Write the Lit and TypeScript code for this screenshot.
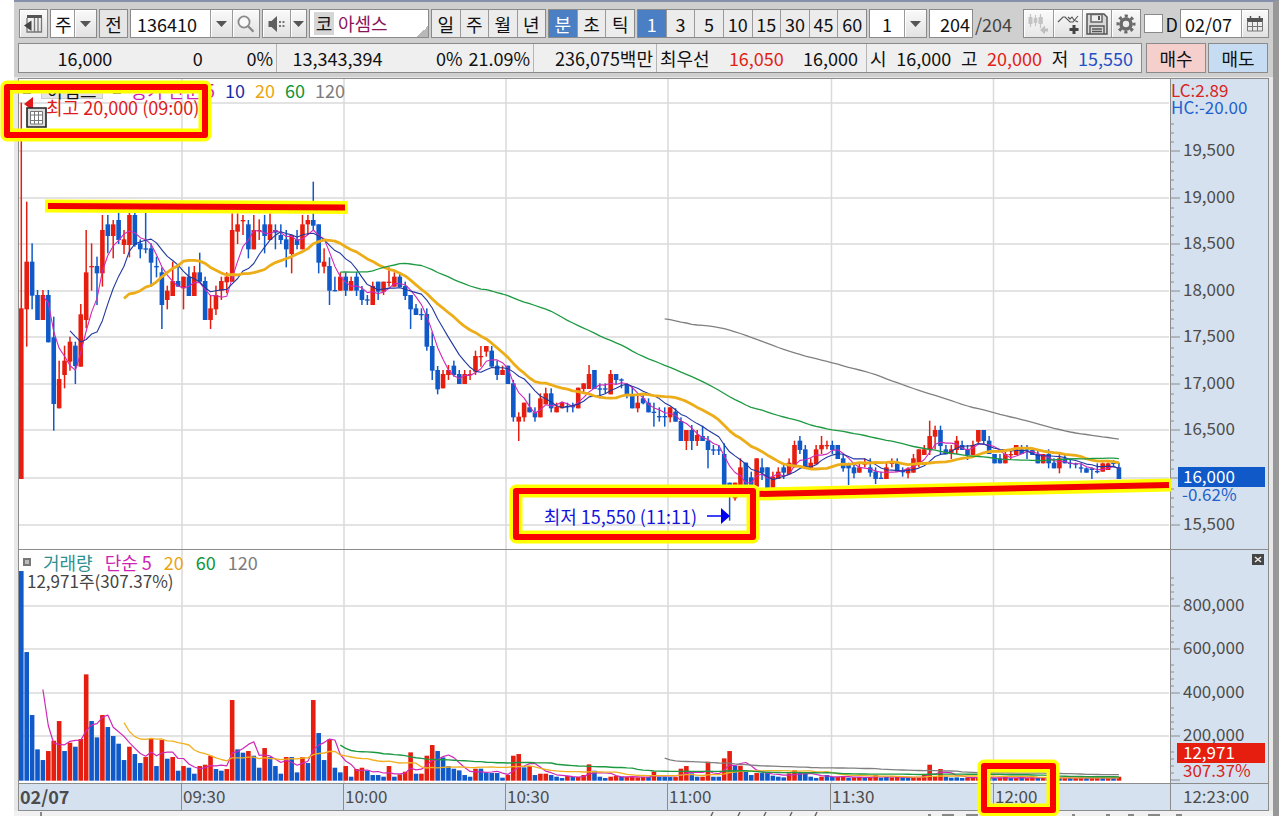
import { LitElement, html, svg, css } from "lit";
import { customElement, state } from "lit/decorators.js";

/* ---------- data ---------- */

const RED = "#e61e0f";
const BLUE = "#1059c9";
const X0 = 21.3;
const STEP = 5.407;
const cx = (i: number) => X0 + STEP * i;

interface Candle {
  up: boolean;
  high: number;
  top: number;
  bottom: number;
  low: number;
}

/* Each entry: direction, high, body top, body bottom, low, in thirds of a unit below `top`. */
const block = (top: number, rows: string): Candle[] =>
  rows
    .trim()
    .split(/\s*;\s*/)
    .filter(Boolean)
    .map((r) => {
      const [d, ...v] = r.split(",");
      const [high, t, b, low] = v.map((n) => top + Number(n) / 3);
      return { up: d === "r", high, top: t, bottom: b, low };
    });

const candles: Candle[] = [
  ...block(
    80,
    `r,68,685,1197,1197;r,365,545,688,800;b,490,545,647,688;b,630,645,720,720;r,630,645,720,720;b,630,645,787,787;
b,710,772,972,1052;r,842,897,985,985;r,797,842,885,925;r,770,785,845,872;b,785,797,858,912;r,672,703,860,860;
r,450,577,720,745;r,490,558,562,632;b,530,558,580,675;r,405,450,580,620;b,405,433,468,520;r,420,433,468,535;
b,398,420,480,492;r,450,478,495,522;r,398,405,495,532;b,398,405,495,500;b,478,490,508,535;b,398,505,509,520;
b,490,505,548,620;b,530,558,562,592;b,562,577,675,747;r,617,632,660,688;r,545,603,648,648;b,560,603,620,620;
r,590,590,625,688;b,560,590,648,648;r,558,577,648,648;b,518,577,605,605;b,590,603,720,720;r,645,685,720,747;
r,617,645,688,705;r,590,603,632,660;r,577,590,607,640;r,400,450,605,605;r,400,433,455,492;r,405,420,424,465;
b,420,433,508,535;r,405,450,508,508;r,418,450,454,480;b,405,433,468,520;r,400,433,480,480;b,433,450,458,508;
b,433,465,480,492;b,450,478,508,562;r,465,465,522,580;b,450,478,495,508;r,405,433,508,508;r,405,420,433,465;
b,305,420,437,450;b,433,433,548,580;r,505,545,560,580;b,532,558,632,675;b,590,630,634,634`,
  ),
  ...block(
    220,
    `r,157,170,212,212;b,157,170,212,228;r,170,183,212,212;b,157,170,212,228;b,198,210,240,255;b,225,238,242,255;
r,185,198,255,255;b,185,185,215,240;r,185,185,215,225;r,142,185,189,200;r,157,170,200,200;b,157,170,202,202;
b,185,198,228,240;b,225,225,268,327;b,252,265,285,285;b,265,282,286,300;b,265,282,380,392;b,335,378,452,480;
b,438,450,508,523;r,450,462,505,505;r,435,450,465,480;b,422,437,465,470;b,450,462,492,492;r,450,462,492,492;
r,450,462,466,480;r,392,408,455,465;r,378,408,412,440;r,378,378,395,410;b,378,392,440,440;b,422,437,465,480;
r,437,450,465,465;b,437,437,492,492;b,480,490,592,605;r,577,590,605,663;r,548,548,592,605;b,520,562,577,577;
b,562,577,592,605;r,520,535,592,592;r,503,520,553,553;b,505,520,565,577;r,548,560,577,577;r,545,548,565,565;
b,548,558,562,577;b,548,558,562,577;r,503,503,565,565;r,490,490,507,520;r,435,462,507,507;b,450,450,507,507;
b,490,505,509,535;b,490,505,509,520;r,450,462,523,523;b,462,462,480,492;b,475,478,482,505;b,490,492,523,535;
b,500,522,565,565;r,520,548,565,577;b,522,535,550,553;b,535,548,577,577;b,548,575,579,620;b,562,588,592,605;
b,562,588,592,620;r,562,562,592,607;b,565,575,605,605;b,592,603,663,663;r,630,630,663,690;b,615,630,663,690;
r,630,645,663,678;b,617,648,663,663;b,648,662,690,745;b,675,688,692,705;b,675,688,692,705`,
  ),
  ...block(
    380,
    `b,190,222,320,320;b,308,308,335,422;r,308,308,355,362;r,235,262,320,320;b,248,248,315,320;b,275,292,320,320;
r,235,235,320,320;b,235,262,278,300;b,262,262,325,325;r,275,290,325,325;r,262,275,297,297;b,250,262,278,297;
r,235,248,283,283;r,182,195,262,262;b,168,182,210,222;b,195,208,265,265;r,235,248,265,265;r,195,208,253,253;
r,168,195,208,222;r,182,195,199,208;b,182,195,210,222;b,195,195,237,237;b,222,235,265,275;b,248,250,265,315;
b,248,262,280,295;r,248,262,278,278;r,235,250,254,262;b,235,262,278,290;b,262,275,297,312;b,275,293,297,297;
r,248,262,297,297;r,235,248,252,262;b,235,248,275,275;b,262,273,277,290;r,262,265,280,295;r,222,235,278,278;
r,208,208,250,262;r,195,208,225,225;r,122,168,210,225;r,137,150,170,208;b,137,150,198,222;b,195,208,223,223;
r,195,208,222,237;r,168,182,210,222;b,182,195,210,210;b,195,208,225,240;r,182,195,225,225;r,150,150,185,195;
b,150,150,183,195;b,168,182,222,222;b,222,222,250,250;b,222,235,250,250;r,208,222,250,250;r,208,222,226,237;
r,195,195,225,225;b,195,208,222,222;b,195,208,212,237;b,208,210,225,225;b,208,222,250,250;r,222,222,250,250;
b,208,222,250,265;b,235,248,265,265;r,222,235,265,280;b,222,235,250,250;b,235,248,252,265;b,248,250,254,265;
b,250,262,266,278;b,262,265,278,278;b,262,265,270,297;b,250,273,277,280;r,248,250,275,275;r,248,250,270,270;
b,240,248,252,262;b,248,262,297,297`,
  ),
];

/* Volume bar heights in thirds; a negative value is a falling minute. */
const volumes: number[] = [
  -629, -386, -197, -94, -62, 89, 120, 179, -89, 114, -102, 125, 319, -179, -130, 197, -161, -134, -111, -62,
  102, -80, -53, 71, 125, -44, 122, -66, 71, -30, 44, -39, -21, 44, 48, 75, -35, -30, 35, 242,
  -94, -84, 89, -75, -39, 98, -71, -44, -21, 71, -71, -25, 71, -53, 242, -143, -62, 124, -39, -25,
  44, -12, 35, 39, -30, -17, -17, -12, 44, -12, 19, 27, 85, -21, 21, 75, 107, -89, -70, -44,
  -36, -31, -17, -12, 36, -36, -23, -23, -23, -9, 17, 75, 80, -40, 44, -17, 21, 21, -17, -12,
  -8, 14, -11, 11, 17, 49, -30, -12, -8, 12, 14, -12, 11, 11, 10, 11, -11, 27, -12, -12,
  -11, 11, 36, 44, -22, -12, 12, 57, -12, -12, 67, 89, -45, 45, -27, -17, 23, -23, -23, -15,
  -12, -10, 22, 31, -23, -21, -12, -8, 12, -17, -11, 11, 12, -9, 10, 11, -9, 10, 17, -9,
  -11, 10, 12, -9, -9, 10, 10, 20, 48, 13, 35, -12, -9, -10, -8, 9, 11, 9, 8, -8,
  -8, 9, 11, -8, 8, -9, 8, 10, -9, 8, -8, 9, -8, 8, -9, 8, 9, -8, 8, 9,
  -8, 8, -9, 12,
];

const VBASE = 780.7;

const average = (vals: number[], n: number): string => {
  const out: string[] = [];
  let sum = 0;
  vals.forEach((v, i) => {
    sum += v;
    if (i >= n) sum -= vals[i - n];
    if (i >= n - 1) out.push(`${cx(i).toFixed(1)},${(sum / n).toFixed(1)}`);
  });
  return out.join(" ");
};

const closes = candles.map((c) => (c.up ? c.top : c.bottom));
const volTops = volumes.map((v) => VBASE - Math.abs(v) / 3);

const TIMES = [182, 344, 506, 668, 831.5, 993.5];
const PRICES: [number, string][] = [
  [151, "19,500"],
  [198, "19,000"],
  [244, "18,500"],
  [291, "18,000"],
  [337, "17,500"],
  [384, "17,000"],
  [430, "16,500"],
  [478, ""],
  [525, "15,500"],
];
const VOLS: [number, string][] = [
  [606, "800,000"],
  [649, "600,000"],
  [693, "400,000"],
  [736, "200,000"],
];

const line = (pts: string, color: string, w: number) =>
  svg`<polyline points=${pts} fill="none" stroke=${color} stroke-width=${w} stroke-linejoin="round"/>`;

/* ---------- icons ---------- */

const caret = svg`<svg viewBox="0 0 11 6" width="11" height="6"><path d="M0 0H11L5.5 6Z" fill="#555"/></svg>`;
const iconDock = svg`<svg viewBox="0 0 20 20" width="20" height="20"><path d="M3 1H18V4H3Z" fill="#555"/><path d="M3 4V18H17.5V4M10.500 4V18M14 4V18" fill="none" stroke="#777" stroke-width="1.300"/><path d="M7.500 6.500V17L0 11.500Z" fill="#444"/></svg>`;
const iconSearch = svg`<svg viewBox="0 0 20 20" width="20" height="20"><circle cx="8" cy="8" r="5.600" fill="#f8f8f8" stroke="#8a8a8a" stroke-width="1.800"/><path d="M12.200 12.200L17.500 17.800" stroke="#8a8a8a" stroke-width="2.400"/></svg>`;
const iconSpeaker = svg`<svg viewBox="0 0 20 20" width="20" height="20"><path d="M1.500 7H4.500L10 2V18L4.500 13H1.500Z" fill="#5f5f5f"/><path d="M12 8h2M15.500 8h2M12 12h2M15.500 12h2" stroke="#777" stroke-width="2"/></svg>`;
const iconCandles = svg`<svg viewBox="0 0 22 22" width="22" height="22"><path d="M3.500 1V14M8.500 2V13M13.500 1V15" stroke="#b5b5b5" stroke-width="1.200"/><path d="M1.500 4h4v7h-4zM6.700 5h3.600v5H6.700zM11.500 4h4.300v7h-4.300z" fill="#b5b5b5"/><path d="M13 17L18 12.500V15.500H21V18.500H18V21.500Z" fill="#b0b0b0"/></svg>`;
const iconWaves = svg`<svg viewBox="0 0 22 22" width="22" height="22"><path d="M1 9L6 4L8 4L13 9L16 9L21 3M11 4L13 6L15 4L17 7L21 9" fill="none" stroke="#555" stroke-width="1.100"/><path d="M17 12V21M12.500 16.500H21.500" stroke="#444" stroke-width="3"/></svg>`;
const iconSave = svg`<svg viewBox="0 0 22 22" width="22" height="22"><path d="M1 1H18L21 4V21H1Z" fill="#d8d8d8" stroke="#555" stroke-width="1.500"/><path d="M5 1.500H16V9H5Z" fill="#eee" stroke="#666" stroke-width="1.500"/><path d="M12 3h2v4h-2z" fill="#555"/><path d="M4 21V13H18V21M6 16H16M6 18.500H16" fill="none" stroke="#555" stroke-width="1.400"/></svg>`;
const iconGear = svg`<svg viewBox="0 0 20 20" width="20" height="20"><circle cx="10" cy="10" r="8" fill="none" stroke="#6a6a6a" stroke-width="3" stroke-dasharray="3.140 3.143" stroke-dashoffset="1.570"/><circle cx="10" cy="10" r="5" fill="none" stroke="#6a6a6a" stroke-width="3.600"/></svg>`;
const iconCalendar = svg`<svg viewBox="0 0 18 18" width="18" height="18"><path d="M1 3H17V7H1Z" fill="#555"/><path d="M4.500 1V4M13.500 1V4" stroke="#555" stroke-width="1.500"/><path d="M1.500 6V16H16.500V6M1 11.500H17M6.500 7V16M11.500 7V16" fill="none" stroke="#777"/></svg>`;
const iconTable = svg`<svg viewBox="0 0 21 21" width="21" height="21"><path d="M1 1H20V20H1Z" fill="#dcdcdc" stroke="#222" stroke-width="1.600"/><path d="M4.500 4.500H16.500V17H4.500ZM8.500 4.500V17M12.500 4.500V17M4.500 8H16.500M4.500 13.500H16.500" fill="#fff" stroke="#777"/></svg>`;

@customElement("app-root")
export class AppRoot extends LitElement {
  @state() private unit = "분";
  @state() private minutes = "1";

  static styles = css`
    :host {
      display: block;
      background: #fff;
      color: #111;
      font: 18px/20px "Noto Sans CJK KR", sans-serif;
    }
    * {
      box-sizing: border-box;
    }
    svg {
      display: block;
    }
    button,
    input,
    select {
      font: inherit;
      color: inherit;
      margin: 0;
      padding: 0;
      border: 0;
      border-radius: 0;
      background: none;
      min-width: 0;
      outline: none;
    }
    .window {
      position: relative;
      margin: 0 2px 0 14px;
      border-top: 2px solid #8690ab;
      border-right: 6px solid #989898;
      background: #cfcfcf;
    }
    .toolbar {
      display: flex;
      align-items: center;
      gap: 2px;
      padding: 7px 4px 5px 5px;
    }
    .group {
      display: flex;
      height: 29px;
      border: 1px solid #8a8a8a;
      background: #fff;
    }
    .group > * {
      height: 27px;
    }
    .group > * + * {
      border-left: 1px solid #9a9a9a;
    }
    .btn {
      display: grid;
      place-items: center;
      background: linear-gradient(#fafafa, #e2e2e2);
      box-shadow: inset 1px 1px #fff;
    }
    .w16 { width: 16px; }
    .w22 { width: 22px; }
    .w27 { width: 27px; }
    .w29 { width: 29px; }
    .seg .tab {
      flex: 1;
      background: #ececec;
      text-align: center;
    }
    .seg .tab.on {
      background: #4a7fc4;
      color: #fff;
    }
    .seg.four { width: 115px; }
    .seg.three { width: 87px; }
    .seg.eight { width: 230px; }
    .plain {
      background: #e6e6e6;
    }
    .code {
      width: 79px;
      padding-left: 6px;
    }
    .pick {
      display: grid;
      align-items: center;
    }
    .pick select {
      grid-area: 1 / 1;
      appearance: none;
      width: 100%;
      height: 27px;
      padding-left: 4px;
    }
    .pick .arrow {
      grid-area: 1 / 1;
      justify-self: end;
      width: 22px;
      height: 27px;
      border-left: 1px solid #9a9a9a;
      pointer-events: none;
    }
    .pick.kind { width: 47px; }
    .pick.count { width: 58px; }
    .pick.count select { padding-left: 12px; }
    .name {
      align-items: center;
      width: 120px;
      padding: 0 0 0 4px;
      gap: 4px;
      color: #8a1259;
      background: linear-gradient(135deg, transparent 50%, #b8b8b8 50%) right bottom / 11px 11px no-repeat #fff;
    }
    .name .chip {
      border: 0;
      height: 23px;
      line-height: 23px;
      width: 20px;
      text-align: center;
      background: #d6d6d6;
      color: #111;
    }
    .name .title { border: 0; line-height: 27px; }
    .shown {
      width: 42px;
      padding-right: 2px;
      text-align: right;
    }
    .of { color: #444; margin-right: auto; }
    .check {
      display: flex;
      align-items: center;
      gap: 3px;
      margin-left: 1px;
    }
    .check input {
      appearance: none;
      width: 19px;
      height: 19px;
      border: 1px solid #8a8a8a;
      background: #fff;
    }
    .date {
      width: 60px;
      padding-left: 4px;
    }
    .dim { opacity: 0.8; }

    .quote {
      display: flex;
      gap: 2px;
      padding: 0 5px 4px 4px;
    }
    .cells {
      flex: 1;
      display: grid;
      grid-template-columns: 257fr 257fr 123fr 210fr 275fr;
      border: 1px solid #8a8a8a;
      background: #efefef;
      height: 30px;
      line-height: 28px;
      margin-right: 2px;
    }
    .cell {
      display: flex;
      justify-content: flex-end;
      padding: 0 3px;
      white-space: nowrap;
    }
    .cell + .cell { border-left: 1px solid #b5b5b5; }
    .cell.spread { justify-content: space-between; padding-right: 8px; }
    .num { width: 36%; text-align: right; }
    .num.tight { width: 32%; }
    .num.pct { width: 27%; }
    .num.last { width: 28%; }
    .num.wide { width: 41%; }
    .up { color: #e32214; }
    .down { color: #2450c8; }
    .trade {
      width: 60px;
      border: 1px solid #8a8a8a;
    }
    .buy { background: #f5cfcb; }
    .sell { background: #c6dcf2; }

    .board {
      background: #e8e8e8;
      padding: 1px 4px 0;
    }
    .chart {
      border: 1px solid #8c8c8c;
      background: #fff;
    }
    .pane {
      display: grid;
      grid-template-columns: 1fr 98px;
      border-bottom: 1px solid #8c8c8c;
    }
    .plot {
      position: relative;
      min-width: 0;
    }
    .plot > svg.canvas {
      width: 100%;
    }
    .axis {
      background: #d6e1ef;
      border-left: 1px solid #8c8c8c;
      fill: #4c4c4c;
      font-size: 17px;
      overflow: visible;
    }
    .legend {
      position: absolute;
      left: 4px;
      top: 2px;
      display: flex;
      align-items: center;
      gap: 12px;
      white-space: nowrap;
    }
    .legend.main { gap: 10px; top: 1px; }
    .legend .box {
      width: 8px;
      height: 8px;
      border: 2px solid #777;
      background: #bbb;
    }
    .tag {
      background: #e4e4e4;
      border: 1px solid #ccc;
      line-height: 16px;
      padding: 0 5px;
    }
    .m5 { color: #cf22b4; }
    .m10 { color: #1a2fa8; }
    .m20 { color: #eaa50f; }
    .m60 { color: #0f9638; }
    .m120 { color: #7c7c7c; }
    .teal { color: #2f9090; }
    .amount {
      position: absolute;
      left: 8px;
      top: 21px;
      font-size: 17px;
      color: #444;
    }
    .mark {
      position: absolute;
      white-space: nowrap;
      display: flex;
      align-items: center;
      gap: 10px;
    }
    .mark.high { left: 5px; top: 18px; color: #e01a1a; gap: 13px; align-items: flex-start; }
    .mark.low { right: 440px; top: 427px; color: #1414dd; }
    .grid-btn { position: absolute; left: 7px; top: 28px; }
    .times {
      display: grid;
      grid-template-columns: 162fr 162fr 162fr 162fr 163fr 163fr 177fr 98px;
      background: #d6e1ef;
      color: #4c4c4c;
      font-size: 17px;
      line-height: 24px;
      height: 26px;
    }
    .times > * { padding-left: 1px; }
    .times > * + * { border-left: 1px solid #8c8c8c; }
    .times > :last-child { padding-left: 12px; }
    .day { font-weight: 700; font-size: 18px; }
    .foot {
      height: 5px;
      background: #f1f1f1;
      width: 100%;
    }
    .notes {
      position: absolute;
      top: -2px;
      left: -14px;
      width: calc(100% + 22px);
      height: 817px;
      pointer-events: none;
    }
  `;

  private tabs(items: string[], current: string, pick: (v: string) => void) {
    return items.map(
      (t) => html`<button class="tab ${t === current ? "on" : ""}" aria-pressed=${t === current} @click=${() => pick(t)}>${t}</button>`,
    );
  }

  private toolbar() {
    return html`<div class="toolbar">
      <div class="group"><button class="btn w27" aria-label="도킹">${iconDock}</button></div>
      <div class="group pick kind">
        <select aria-label="종목 구분"><option>주</option></select>
        <span class="arrow btn">${caret}</span>
      </div>
      <div class="group"><button class="plain w27">전</button></div>
      <div class="group">
        <input class="code" aria-label="종목코드" value="136410" />
        <button class="btn w22" aria-label="목록">${caret}</button>
        <button class="btn w27" aria-label="검색">${iconSearch}</button>
      </div>
      <div class="group">
        <button class="btn w27" aria-label="소리">${iconSpeaker}</button>
        <button class="btn w16" aria-label="소리 설정">${caret}</button>
      </div>
      <div class="group name"><span class="chip">코</span><span class="title">아셈스</span></div>
      <div class="group seg four">${this.tabs(["일", "주", "월", "년"], "", () => {})}</div>
      <div class="group seg three">${this.tabs(["분", "초", "틱"], this.unit, (v) => (this.unit = v))}</div>
      <div class="group seg eight">
        ${this.tabs(["1", "3", "5", "10", "15", "30", "45", "60"], this.minutes, (v) => (this.minutes = v))}
      </div>
      <div class="group pick count">
        <select aria-label="주기"><option>1</option></select>
        <span class="arrow btn">${caret}</span>
      </div>
      <div class="group"><input class="shown" aria-label="표시 봉 수" value="204" /></div>
      <span class="of">/204</span>
      <div class="group">
        <button class="btn w29 dim" aria-label="봉 이동">${iconCandles}</button>
        <button class="btn w29" aria-label="지표 추가">${iconWaves}</button>
        <button class="btn w29" aria-label="저장">${iconSave}</button>
        <button class="btn w29" aria-label="설정">${iconGear}</button>
      </div>
      <label class="check"><input type="checkbox" />D</label>
      <div class="group">
        <input class="date" aria-label="날짜" value="02/07" />
        <button class="btn w27" aria-label="달력">${iconCalendar}</button>
      </div>
    </div>`;
  }

  private quote() {
    return html`<div class="quote">
      <div class="cells">
        <div class="cell"><span class="num">16,000</span><span class="num">0</span><span class="num last">0%</span></div>
        <div class="cell"><span class="num wide">13,343,394</span><span class="num tight">0%</span><span class="num pct">21.09%</span></div>
        <div class="cell">236,075백만</div>
        <div class="cell spread"><span>최우선</span><span class="up">16,050</span><span>16,000</span></div>
        <div class="cell spread">
          <span>시</span><span>16,000</span><span>고</span><span class="up">20,000</span><span>저</span><span class="down">15,550</span>
        </div>
      </div>
      <button class="trade buy">매수</button>
      <button class="trade sell">매도</button>
    </div>`;
  }

  private grid(ys: number[], top: number, bottom: number) {
    return svg`<g stroke="#dadada" stroke-width="1.500">
      ${ys.map((y) => svg`<path d=${`M19 ${y}H1169`}/>`)}
      ${TIMES.map((x) => svg`<path d=${`M${x} ${top}V${bottom}`}/>`)}
    </g>`;
  }

  private pricePane() {
    const minors = PRICES.flatMap(([y]) => [1, 2, 3, 4].map((k) => y - k * 9)).filter((y) => y > 120);
    return html`<div class="pane">
      <div class="plot">
        <svg class="canvas" height="470" viewBox="19 79 1151 470" preserveAspectRatio="none">
          ${this.grid([103, ...PRICES.map((p) => p[0])], 79, 549)}
          ${candles.map((c, i) => {
            const col = c.up ? RED : BLUE;
            return svg`<rect x=${cx(i) - 0.75} y=${c.high} width="1.500" height=${c.low - c.high} fill=${col}/>
              <rect x=${cx(i) - 2.3} y=${c.top} width="4.600" height=${Math.max(1.3, c.bottom - c.top)} fill=${col}/>`;
          })}
          ${line(average(closes, 5), "#d028b8", 1.1)}
          ${line(average(closes, 10), "#2038a0", 1.1)}
          ${line(average(closes, 20), "#ecad18", 2.8)}
          ${line(average(closes, 60), "#1d9a41", 1.3)}
          ${line(average(closes, 120), "#808080", 1.3)}
        </svg>
        <div class="legend main">
          <span class="box"></span><span class="tag">아셈스</span><span class="box"></span>
          <span class="m5">종가 단순 5</span><span class="m10">10</span><span class="m20">20</span>
          <span class="m60">60</span><span class="m120">120</span>
        </div>
        <div class="mark high">
          <svg viewBox="0 0 9 14" width="9" height="14"><path d="M9 0V14L0 7Z" fill="#e01a1a"/></svg>
          최고 20,000 (09:00)
        </div>
        <button class="grid-btn" aria-label="표">${iconTable}</button>
        <div class="mark low">
          최저 15,550 (11:11)
          <svg viewBox="0 0 23 16" width="23" height="16"><path d="M0 7.200H14V0L23 8L14 16V8.800H0Z" fill="#0000f0"/></svg>
        </div>
      </div>
      <svg class="axis" width="98" height="470" viewBox="1171 79 97 470">
        <g stroke="#8c8c8c">
          ${PRICES.map(([y]) => svg`<path d=${`M1171 ${y}H1180`}/>`)}
          ${minors.map((y) => svg`<path d=${`M1171 ${y}H1174`}/>`)}
        </g>
        <text x="1171" y="97" fill="#d8241c">LC:2.89</text>
        <text x="1171" y="114" fill="#1d61cc">HC:-20.00</text>
        ${PRICES.map(([y, t]) => svg`<text x="1183" y=${y + 5}>${t}</text>`)}
        <rect x="1178" y="467" width="87" height="20" fill=${BLUE}/>
        <text x="1183" y="483" fill="#fff">16,000</text>
        <text x="1182" y="501" fill="#1d61cc">-0.62%</text>
      </svg>
    </div>`;
  }

  private volumePane() {
    const minors = [...VOLS.map((v) => v[0]), 780].flatMap((y) => [1, 2, 3, 4].map((k) => y - k * 7));
    return html`<div class="pane">
      <div class="plot">
        <svg class="canvas" height="233" viewBox="19 550 1151 233" preserveAspectRatio="none">
          ${this.grid(VOLS.map((v) => v[0]), 550, 783)}
          ${volumes.map(
            (v, i) =>
              svg`<rect x=${cx(i) - 2.3} y=${volTops[i]} width="4.600" height=${Math.abs(v) / 3} fill=${v > 0 ? RED : BLUE}/>`,
          )}
          ${line(average(volTops, 5), "#d028b8", 1.2)}
          ${line(average(volTops, 20), "#f0b020", 1.3)}
          ${line(average(volTops, 60), "#1d9a41", 1.4)}
          ${line(average(volTops, 120), "#808080", 1.3)}
        </svg>
        <div class="legend">
          <span class="box"></span><span class="teal">거래량</span><span class="m5">단순 5</span>
          <span class="m20">20</span><span class="m60">60</span><span class="m120">120</span>
        </div>
        <div class="amount">12,971주(307.37%)</div>
      </div>
      <svg class="axis" width="98" height="233" viewBox="1171 550 97 233">
        <g stroke="#8c8c8c">
          ${[...VOLS.map((v) => v[0]), 780].map((y) => svg`<path d=${`M1171 ${y}H1180`}/>`)}
          ${minors.map((y) => svg`<path d=${`M1171 ${y}H1174`}/>`)}
        </g>
        <rect x="1252" y="554" width="12" height="11" fill="#444"/>
        <path d="M1255 557L1261 562M1261 557L1255 562" stroke="#eee" stroke-width="1.500"/>
        ${VOLS.map(([y, t]) => svg`<text x="1183" y=${y + 5}>${t}</text>`)}
        <rect x="1177" y="743" width="88" height="20" fill=${RED}/>
        <text x="1183" y="759" fill="#fff">12,971</text>
        <text x="1183" y="777" fill="#d8241c">307.37%</text>
      </svg>
    </div>`;
  }

  private notes() {
    const frame = (x: number, y: number, w: number, h: number) => svg`
      <rect x=${x} y=${y} width=${w} height=${h} fill="none" stroke="#ffff00" stroke-width="13" stroke-linejoin="round"/>
      <rect x=${x} y=${y} width=${w} height=${h} fill="none" stroke="#fb0000" stroke-width="6" stroke-linejoin="round"/>`;
    const bar = (d: string, core: string) => svg`
      <path d=${d} stroke="#ffff00" stroke-width="13"/>
      <path d=${core} stroke="#f00000" stroke-width="6"/>`;
    return html`<svg class="notes" viewBox="0 0 1281 817" preserveAspectRatio="none">
      ${bar("M45 206L348 207.5", "M48 206L345 207.5")} ${bar("M758 494L1171 485", "M758 494L1169 485")}
      ${frame(7, 87, 198, 48)} ${frame(516, 491, 237, 46)} ${frame(984, 766, 69, 44)}
    </svg>`;
  }

  render() {
    return html`<div class="window">
      ${this.toolbar()} ${this.quote()}
      <div class="board">
        <div class="chart">
          ${this.pricePane()} ${this.volumePane()}
          <div class="times">
            <span class="day">02/07</span><span>09:30</span><span>10:00</span><span>10:30</span><span>11:00</span
            ><span>11:30</span><span>12:00</span><span>12:23:00</span>
          </div>
        </div>
      </div>
      <svg class="foot" viewBox="14 811 1259 5" preserveAspectRatio="none">
        <path d="M41 812V816M711 816L713 812M738 816L740 812M764 816L766 812M790 816L792 812M815 816L817 812" stroke="#666" stroke-width="1.500"/>
        <path d="M928 815h3M942 815h12M966 815h12M990 815h10M1072 815h3M1106 815h4M1128 815h6M1148 815h12M1176 815h6" stroke="#666" stroke-width="1.500"/>
      </svg>
      ${this.notes()}
    </div>`;
  }
}
